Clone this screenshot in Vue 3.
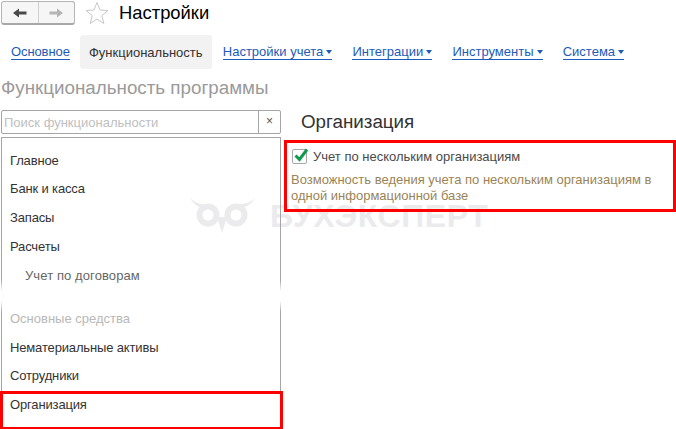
<script setup>
const tabs = [
  { label: 'Настройки учета' },
  { label: 'Интеграции' },
  { label: 'Инструменты' },
  { label: 'Система' },
]
const items = [
  { label: 'Главное' },
  { label: 'Банк и касса' },
  { label: 'Запасы' },
  { label: 'Расчеты' },
  { label: 'Учет по договорам', sub: true },
  { label: 'Основные средства', faded: true },
  { label: 'Нематериальные активы' },
  { label: 'Сотрудники' },
  { label: 'Организация' },
]
</script>

<template>
  <div class="page">
    <header class="head">
      <div class="nav">
        <button class="nav-btn">
          <svg width="16" height="12" viewBox="0 0 16 12"><path d="M1 6 L7 1.500 V4.500 H14.500 V7.500 H7 V10.500 Z" fill="#4a4a4a"/></svg>
        </button>
        <button class="nav-btn">
          <svg width="16" height="12" viewBox="0 0 16 12"><path d="M15 6 L9 1.500 V4.500 H1.500 V7.500 H9 V10.500 Z" fill="#b4b4b4"/></svg>
        </button>
      </div>
      <svg class="star" width="24" height="24" viewBox="0 0 24 24"><path d="M12 1.500 L15 9 L23 9.500 L16.800 14.500 L18.800 22.500 L12 18 L5.200 22.500 L7.200 14.500 L1 9.500 L9 9 Z" fill="#fff" stroke="#c8c8c8"/></svg>
      <h1 class="title">Настройки</h1>
    </header>

    <nav class="tabs">
      <a class="tab-link first">Основное</a>
      <span class="tab-active">Функциональность</span>
      <a v-for="t in tabs" :key="t.label" class="tab-link">{{ t.label }} <i class="caret"></i></a>
    </nav>

    <h2 class="subtitle">Функциональность программы</h2>

    <div class="columns">
      <aside class="left">
        <div class="search">
          <span class="search-input">Поиск функциональности</span>
          <span class="search-clear">×</span>
        </div>
        <div class="list-wrap">
          <ul class="list">
            <li v-for="it in items" :key="it.label" class="item" :class="{ sub: it.sub, faded: it.faded }">{{ it.label }}</li>
          </ul>
          <div class="fade"></div>
          <div class="red-list"></div>
        </div>
      </aside>
      <section class="right">
        <h3 class="org">Организация</h3>
        <div class="red-box">
          <label class="check">
            <span class="box">
              <svg width="18" height="18" viewBox="0 0 18 18"><path d="M3.500 7.500 L7.500 11.500 L15 1.500" fill="none" stroke="#0f9a4e" stroke-width="3"/></svg>
            </span>
            Учет по нескольким организациям
          </label>
          <p class="desc">Возможность ведения учета по нескольким организациям в одной информационной базе</p>
        </div>
      </section>
    </div>

    <div class="watermark">
      <svg width="66" height="35" viewBox="0 0 66 35">
        <g fill="none" stroke="#ebebee" stroke-width="6">
          <circle cx="18" cy="17" r="8.500"/>
          <circle cx="46" cy="17" r="8.500"/>
        </g>
        <path d="M0 0 C5 5 11 7 20 6 L14 11 C8 9 3 6 0 0 Z M65 0 C60 5 54 7 44 6 L50 11 C56 9 62 6 65 0 Z M27 19 L37 19 L32 35 Z" fill="#ebebee"/>
      </svg>
      <span class="wm-text">БУХЭКСПЕРТ</span>
    </div>
  </div>
</template>

<style>
html, body { margin: 0; background: #fff; overflow: hidden; }
</style>

<style scoped>
.page { position: relative; width: 676px; height: 429px; overflow: hidden; font-family: "Liberation Sans", Arial, sans-serif; font-size: 13px; color: #333; }
.head { display: flex; align-items: center; height: 26px; padding: 0 0 0 1px; }
.nav { display: flex; width: 74px; height: 24px; border: 1px solid #b5b5b5; border-bottom: 2px solid #a8a8a8; border-radius: 3px; background: #f6f6f6; box-sizing: border-box; }
.nav-btn { flex: 1; border: 0; padding: 0; background: none; display: flex; align-items: center; justify-content: center; }
.nav-btn + .nav-btn { border-left: 1px solid #d0d0d0; }
.star { margin-left: 10px; }
.title { margin: 0 0 0 10px; font-size: 18.4px; font-weight: 400; color: #000; line-height: 26px; }
.tabs { display: flex; align-items: center; height: 34px; margin-top: 9px; }
.tab-link { color: #1c5bb8; border-bottom: 1px solid #1c5bb8; line-height: 14px; padding-top: 1px; margin-right: 20px; white-space: nowrap; }
.tab-link.first { margin-left: 11px; margin-right: 10px; letter-spacing: -.1px; }
.tab-active { height: 34px; line-height: 35px; width: 132px; text-align: center; background: #f2f2f2; border-radius: 3px; margin-right: 11px; color: #333; }
.caret { display: inline-block; width: 0; height: 0; border: 3px solid transparent; border-top: 4px solid #1c5bb8; border-bottom: 0; vertical-align: 2px; margin-left: -.4px; }
.subtitle { margin: 9px 0 0 1px; font-size: 18.8px; font-weight: 400; color: #9a9a9a; line-height: 20px; }
.columns { position: relative; z-index: 1; display: flex; margin-top: 12px; }
.left { width: 282px; flex: none; padding-left: 1px; box-sizing: border-box; }
.search { display: flex; width: 280px; height: 24px; border: 1px solid #a5a5a5; border-radius: 2px; box-sizing: border-box; }
.search-input { flex: 1; color: #c0c0c0; line-height: 23px; padding-left: 2px; }
.search-clear { width: 21px; border-left: 1px solid #a5a5a5; text-align: center; line-height: 21px; color: #555; font-size: 12px; }
.list-wrap { position: relative; width: 280px; height: 300px; margin-top: 3px; border: 1px solid #a5a5a5; box-sizing: border-box; }
.list { list-style: none; margin: 0; padding: 7.500px 0 0 8px; letter-spacing: -.15px; }
.item { height: 28.800px; line-height: 29px; color: #333; }
.item.sub { padding-left: 15px; color: #666; letter-spacing: .1px; }
.item.faded { color: #b8b8b8; margin-top: 14.400px; letter-spacing: 0; }
.fade { position: absolute; left: -2px; right: -2px; top: 142px; height: 32px; background: linear-gradient(#fff0, #fff 35%, #fff 65%, #fff0); }
.red-list { position: absolute; left: -2px; top: 253px; width: 283px; height: 39px; border: 3px solid #f00; box-sizing: border-box; }
.right { flex: 1; padding-left: 2px; }
.org { margin: 0 0 0 17px; font-size: 18.8px; font-weight: 400; color: #333; line-height: 24px; }
.red-box { margin-top: 6px; height: 72px; border: 3px solid #f00; box-sizing: border-box; padding: 5px 0 0 4px; }
.check { display: flex; align-items: center; gap: 6px; color: #4a4a4a; line-height: 17px; }
.box { display: block; position: relative; width: 13px; height: 13px; margin-left: 1px; border: 1px solid #a8a8a8; border-radius: 2px; }
.box svg { position: absolute; left: -1px; top: -2px; }
.desc { margin: 7px 0 0; color: #9a8456; line-height: 16px; }
.watermark { position: absolute; z-index: 0; left: 190px; top: 198px; display: flex; align-items: center; gap: 14px; pointer-events: none; }
.wm-text { font-size: 32px; font-weight: 700; color: #ebebee; letter-spacing: .6px; line-height: 24px; }
</style>
